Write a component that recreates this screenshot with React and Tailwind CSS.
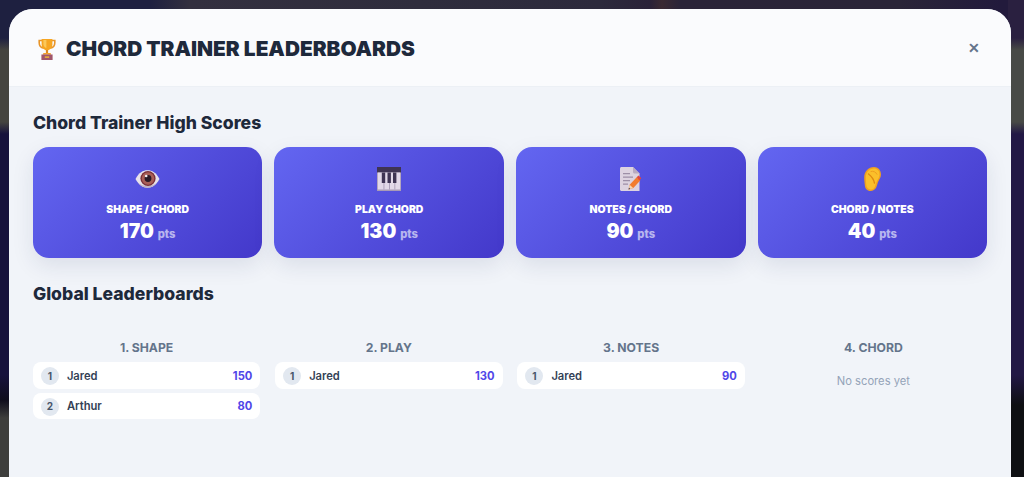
const TrophyIcon = () => (
  <svg width="18" height="22" viewBox="0 0 18 22" className="shrink-0">
    <path d="M4 2.500H1.200v2.200c0 3 1.800 5 4.600 5.400" fill="none" stroke="#e8952a" strokeWidth="1.600" />
    <path d="M14 2.500h2.800v2.200c0 3-1.800 5-4.600 5.400" fill="none" stroke="#e8952a" strokeWidth="1.600" />
    <path d="M3.600 1h10.800v5.200c0 3.600-2.400 6-5.400 6s-5.400-2.400-5.400-6z" fill="#f6a623" />
    <path d="M5.400 2h3v8c-1.800-.6-3-2.100-3-4z" fill="#fbc85a" />
    <path d="M7.900 12h2.200v3.200H7.900z" fill="#e08a1e" />
    <path d="M5.400 15h7.200l.6 1.800H4.800z" fill="#f0a030" />
    <path d="M3.400 16.600h11.200V22H3.400z" fill="#a0566a" />
    <path d="M6.800 18.200h4.400v1.800H6.800z" fill="#e3a63f" />
  </svg>
);

const EyeIcon = () => (
  <svg width="25" height="18" viewBox="0 0 25 18">
    <path d="M.5 9C4 2.500 8 .3 12.500.3S21 2.500 24.500 9c-3.500 6.500-7.500 8.700-12 8.700S4 15.500.5 9z" fill="#e8e2ea" />
    <path d="M3 13c2.500 3 6 4.700 9.500 4.700S19.500 16 22 13c-3 2-6 3-9.500 3S6 15 3 13z" fill="#bfb3c6" />
    <circle cx="13" cy="8.500" r="7.600" fill="#7a2f38" />
    <circle cx="13" cy="8.500" r="6.200" fill="#a85f58" />
    <circle cx="13" cy="8.500" r="3.400" fill="#2a1a26" />
    <circle cx="11.200" cy="6" r="1.300" fill="#f4eef2" />
  </svg>
);

const PianoIcon = () => (
  <svg width="24" height="24" viewBox="0 0 24 24">
    <path d="M0 0h24v24H0z" fill="#a99bb5" />
    <path d="M0 0h24v5.500H0z" fill="#3f3453" />
    <path d="M.8 5.500h22.400V22.600H.8z" fill="#e2d8e8" />
    <path d="M6.500 5.500h.9v17h-.9zM12 5.500h.9v17H12zM17.400 5.500h.9v17h-.9z" fill="#a99bb5" />
    <path d="M4.800 5.500h3.400v10.500H4.800zM10.500 5.500h3.400v10.500h-3.400zM16 5.500h3.400v10.500H16z" fill="#3f3453" />
  </svg>
);

const MemoIcon = () => (
  <svg width="21" height="24" viewBox="0 0 21 24">
    <path d="M0 1.500C0 .7.700 0 1.500 0H13l6.500 6.500V24H1.500C.7 24 0 23.300 0 22.500z" fill="#ddd3e0" />
    <path d="M13 0l6.500 6.500H14.500c-.8 0-1.500-.7-1.500-1.500z" fill="#b9abc0" />
    <path d="M3 6h7v1.200H3zM3 9.500h10v1.200H3zM3 13h7v1.200H3zM3 16.500h5v1.200H3z" fill="#9d8fa6" />
    <path d="M8.500 22.500l1.200-4.800 7-7.500 3.600 3.400-7 7.500z" fill="#f27c2e" />
    <path d="M16.700 10.200l1.700-1.800 2.600 2.400v.6l-1.700 2.200z" fill="#e0483e" />
    <path d="M8.500 22.500l1.200-4.800 3.400 3.200z" fill="#f6d7b0" />
    <path d="M8.500 22.500l.5-2 1.400 1.400z" fill="#4a3a4c" />
  </svg>
);

const EarIcon = () => (
  <svg width="17" height="24" viewBox="0 0 17 24">
    <path d="M10 0c4 0 7 3 7 7.500 0 3-1.600 4.800-2.600 6.800-1 2-1 3.700-2.200 6.200C11 22.800 9 24 6.500 24 3 24 1 21.500.8 18 .5 15 .2 13 .2 10.500.2 4.500 4.500 0 10 0z" fill="#f0a020" />
    <path d="M10 1.500c3.300 0 5.500 2.500 5.500 6 0 2.800-1.500 4.500-2.500 6.500-1 2-1.100 3.600-2.200 6-.9 2-2.500 2.500-4.300 2.500-2.600 0-4-2-4.200-4.700C2 15 1.800 13 1.800 10.500 1.800 5.300 5.300 1.500 10 1.500z" fill="#fbbf2a" />
    <path d="M4.500 7c2.500 1.800 5 5 6 9" fill="none" stroke="#e08a10" strokeWidth="1.400" strokeLinecap="round" />
    <path d="M7 4.500c2.500-.8 5 .5 6 2.800" fill="none" stroke="#f0a020" strokeWidth="1" strokeLinecap="round" />
  </svg>
);

const scores = [
  { icon: <EyeIcon />, label: 'SHAPE / CHORD', value: 170 },
  { icon: <PianoIcon />, label: 'PLAY CHORD', value: 130 },
  { icon: <MemoIcon />, label: 'NOTES / CHORD', value: 90 },
  { icon: <EarIcon />, label: 'CHORD / NOTES', value: 40 },
];

const boards = [
  { title: '1. SHAPE', rows: [{ name: 'Jared', score: 150 }, { name: 'Arthur', score: 80 }] },
  { title: '2. PLAY', rows: [{ name: 'Jared', score: 130 }] },
  { title: '3. NOTES', rows: [{ name: 'Jared', score: 90 }] },
  { title: '4. CHORD', rows: [] },
];

export default function App() {
  return (
    <div className="relative h-[477px] w-[1024px] overflow-hidden font-['Inter',sans-serif]">
      {/* blurred page behind the modal */}
      <div className="absolute inset-0 flex justify-between bg-[linear-gradient(to_right,#1e2040_0px,#1e2040_150px,#33303f_190px,#2f2d3d_420px,#2c2a3c_600px,#2a2238_650px,#3a2a32_662px,#2a2438_680px,#2a2538_900px,#221a3c_1000px)]">
        <div className="w-[12px] bg-[linear-gradient(to_bottom,#1e2040_0px,#1e2040_38px,#45443f_50px,#45443f_122px,#17123c_134px,#17123c_375px,#0f0d1c_400px,#3e3e3c_418px)]" />
        <div className="w-[16px] bg-[linear-gradient(to_bottom,#2a2040_0px,#2a2040_38px,#484a46_50px,#484a46_122px,#221845_134px,#221845_375px,#0e0f12_405px)]" />
      </div>

      <div className="relative ml-[9px] mt-[9px] w-[1002px] h-[468px] rounded-t-[24px] bg-[#f1f4f9] overflow-hidden">
        <div className="h-[78px] flex items-center justify-between pl-[29px] pr-[31px] bg-[#fafbfd] border-b border-[#ecf0f5]">
          <div className="flex items-center gap-[10px] pt-[2px]">
            <TrophyIcon />
            <h1 className="text-[20.8px] font-black text-[#1e293b]">CHORD TRAINER LEADERBOARDS</h1>
          </div>
          <span className="text-[#64748b] text-[14px] font-bold">✕</span>
        </div>
        <div className="px-[23.9px] pt-[25px]">
          <h2 className="text-[17.6px] font-extrabold text-[#1e293b] leading-[22px]">Chord Trainer High Scores</h2>
          <div className="grid grid-cols-4 gap-[12px] mt-[13px]">
            {scores.map((s) => (
              <div key={s.label} className="h-[111px] pt-[20px] rounded-[16px] bg-[linear-gradient(135deg,#6366f1,#4338ca)] shadow-[0_8px_22px_rgba(30,41,90,0.1)] text-white flex flex-col items-center">
                <div className="h-[24px] flex items-center justify-center">{s.icon}</div>
                <div className="text-[10.4px] font-black leading-[13px] mt-[12px]">{s.label}</div>
                <div className="text-[19.5px] font-black leading-[26px] mt-[2px]">{s.value} <span className="text-[11.2px] font-extrabold opacity-60">pts</span></div>
              </div>
            ))}
          </div>
          <h2 className="text-[17.6px] font-extrabold text-[#1e293b] leading-[22px] mt-[25px]">Global Leaderboards</h2>
          <div className="grid grid-cols-4 gap-[14.8px] mt-[34px]">
            {boards.map((b) => (
              <div key={b.title}>
                <div className="text-[12.2px] font-bold text-[#64748b] text-center mb-[5px]">{b.title}</div>
                {b.rows.length === 0 && <div className="text-[11.2px] text-[#94a3b8] text-center mt-[16px]">No scores yet</div>}
                <div className="flex flex-col gap-[4px]">
                  {b.rows.map((r, i) => (
                    <div key={r.name} className="h-[26.5px] pt-[1px] bg-white rounded-[8px] flex items-center px-[8px] text-[11.2px]">
                      <span className="w-[18px] h-[18px] rounded-full bg-[#e2e8f0] text-[#475569] text-[10px] font-bold flex items-center justify-center mr-[8px]">{i + 1}</span>
                      <span className="font-semibold text-[#334155] flex-1">{r.name}</span>
                      <span className="font-bold text-[#5046e8]">{r.score}</span>
                    </div>
                  ))}
                </div>
              </div>
            ))}
          </div>
        </div>
      </div>
    </div>
  );
}
